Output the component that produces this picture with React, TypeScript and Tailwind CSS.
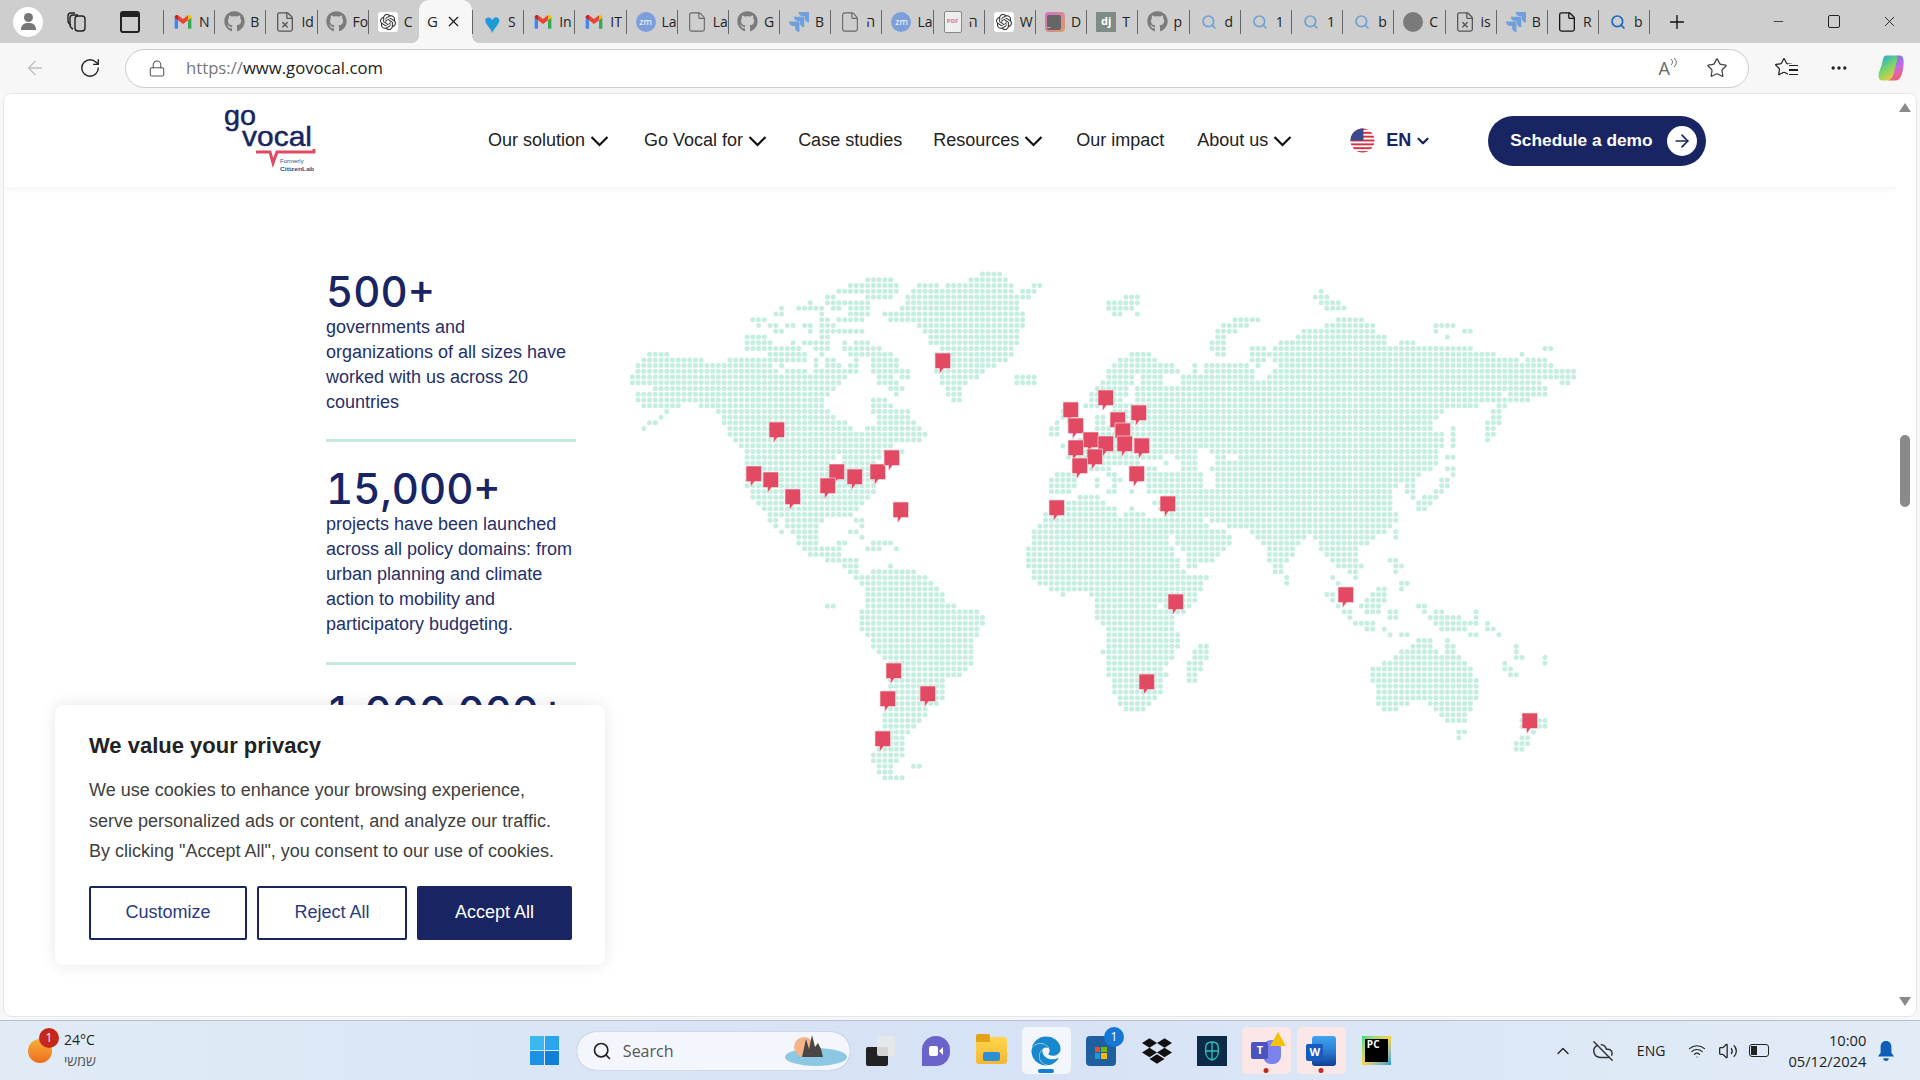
import { ArrowLeft, ChevronDown, ChevronUp, CloudOff, File, FileX, Lock, Minus, MoreHorizontal, Plus, RotateCw, Search, Star, Volume2, Wifi, X } from "lucide-react";
import { FaEdge, FaGithub } from "react-icons/fa";
import { SiDropbox, SiJira, SiOpenai } from "react-icons/si";

const NAVY = "#182562";

// dot map of the world, one string of column spans per row
const MAP_ROWS = [
  "61-64",
  "41-45 59-65",
  "38-46 50-53 55-66 70-71",
  "36-46 49-66 68-70 120",
  "34-35 41-45 48-69 86-88 119-121",
  "31 34-41 48-67 83-88 120-123",
  "26 29-33 35-36 38-41 47-67 83-87 121-124",
  "25-26 33 38-41 44-68 84-85 88",
  "21-23 33-34 36-40 45-68 105-109 123-127",
  "22 24-25 27-28 30-31 33-35 50-68 103-107 121-129 140-143",
  "25-26 31 33-40 51-67 102-105 117-129 140 145-146",
  "20-23 33-34 52-67 102-103 116-131 142",
  "20-24 28 30-34 37 39-41 52-67 101-103 113-131 134-136",
  "20-29 32-34 37-43 54-66 101-103 108-110 112-146 159-160",
  "3-6 24-30 33 38-45 53-66 87-90 102-103 108-150 155",
  "2-12 17-30 32 34-35 39 42-46 55-65 85-91 108-110 112-154 156-159",
  "1-24 26 32 34-36 38-39 42-46 54-63 84-94 98 100-107 109 113-160",
  "1-25 27-30 32-39 42-48 53-61 83-95 98 100-108 112-164",
  "0-37 43-45 47-48 54-60 67-70 83-87 89-92 96-108 111-164",
  "0-36 43-46 54-58 67-70 82-87 89-92 96-158 162-163",
  "4-35 45-47 55-57 81-86 88-159",
  "1-34 46 55-57 80-86 88-151 153-159",
  "1-33 42-44 56-57 80-85 88-156",
  "2-8 12-33 42-45 79-81 84-147 151-152",
  "6 15-34 42-48 75-77 84-141 150-151",
  "5 16-35 43-48 75-76 81-82 84-140 150-151",
  "3-4 16-37 43-49 74 81-82 84-139 149-151",
  "2 17-38 41-50 73-74 81-83 85-139 143 149-150",
  "17-51 73-74 80-141 143 149-150",
  "18-50 78-141 143 149",
  "19-45 75 78-141 143",
  "20-47 77-98 101-140",
  "20-35 37-43 76-92 95-98 102-103 106-140 142-143",
  "20-34 37-42 80-88 93 96-98 102-140",
  "20-41 78-83 90-91 96-98 101-139 142-143",
  "20-42 74-77 83-84 90-99 102-137 143",
  "20-42 73-77 81 84-85 90-99 102-136 141-142",
  "20-42 73-77 81 84 90-99 102-133 135-136 141-142",
  "21-42 73-76 83-84 87 90-132 135-136 140-141",
  "21-41 78-81 93-132 136 138-140",
  "22-40 76-82 91-132 137-139",
  "23-39 75-84 87 92-132 137-138",
  "24-38 72-84 86-89 93-133",
  "24-25 27-33 39-40 72-99 101-133",
  "25 27-32 40 71-100 104-132",
  "26 28-32 38-39 70-103 108-131 133",
  "29-32 40 70-93 95-104 109-117 119-129 133",
  "29-32 36-37 42-45 70-93 95-104 110-116 120-128",
  "30-36 41-43 46 69-94 96-103 111-115 120-126",
  "31-36 69-94 97-102 111-115 121-126",
  "34-39 69-95 97-101 111-114 122-126 132-133",
  "37-39 45 69-95 97-98 112-113 123-127 133-134",
  "38-39 42-49 70-96 112-113 125-126 133",
  "39-51 70-100 114 122 126",
  "40-52 71-99 114 123 134-135",
  "41-53 73-99 130-131 134",
  "41-54 75 80-98 121-122 129-131",
  "41-54 81-98 122 128-131",
  "34-35 41-56 81-91 93-97 123 127-130 137-138",
  "40-60 81-96 124-125 128-130 132-133 138 140-141 147",
  "40-61 81-94 125 132-133 139-144 147",
  "40-61 82-94 126-129 140-147 149",
  "40-60 83-94 128-129 131 141-145 149-150",
  "41-60 83-95 132 134-135 146-147 151",
  "42-59 83-95 137-139 142",
  "42-59 83-95 99-100 136-139 142-143 154",
  "43-59 82-94 98-100 134-140 142-143 154",
  "44-59 83-94 98-100 133-144 154-155 159",
  "45-59 83-93 97-99 131-145 152 159",
  "45-58 83-92 97-99 129-146 152-153",
  "45-57 83-93 97-98 129-146 153-154",
  "45-54 84-92 97-98 129-147",
  "45-54 84-92 130-147",
  "45-54 84-92 130-147",
  "46-54 85-91 130-147",
  "45-53 85-90 130-135 139-146",
  "45-51 86-89 131-133 140-146",
  "44-51 141-145",
  "44-50 142-145 155-159",
  "44-49 155-159",
  "43-48 144-145 157",
  "43-47 144 155-156",
  "43-47 154-156",
  "43-47 154-155",
  "42-47",
  "42-46",
  "43-45 49-50",
  "43-45",
  "44-47",
];

// top-left corner of each pin, in page pixels
const PINS: [number, number][] = [
  [935, 353], [769, 422], [746, 466], [763, 472], [785, 489], [829, 464], [820, 478], [847, 469], [870, 464],
  [884, 450], [893, 502], [1098, 390], [1063, 402], [1068, 418], [1110, 412], [1131, 405], [1115, 423], [1083, 432],
  [1098, 436], [1117, 436], [1134, 438], [1068, 440], [1087, 449], [1072, 458], [1129, 466], [1160, 496], [1049, 500],
  [1168, 594], [1139, 674], [886, 663], [880, 691], [920, 686], [875, 731], [1338, 587], [1522, 713],
];

function WorldMap() {
  const dots: { x: number; y: number }[] = [];
  MAP_ROWS.forEach((row, r) => {
    row.split(" ").forEach((span) => {
      const [a, b] = span.split("-").map(Number);
      for (let c = a; c <= (b ?? a); c++) {
        dots.push({ x: 632.3 + c * 5.74, y: 274 + r * 5.725 });
      }
    });
  });
  return (
    <svg viewBox="620 264 970 530" className="ml-[44px] mt-[77px] h-[530px] w-[970px] shrink-0">
      {dots.map((d, i) => (
        <circle key={i} cx={d.x} cy={d.y} r="2.5" fill="#c4eee0" />
      ))}
      {PINS.map(([x, y], i) => (
        <path
          key={i}
          transform={`translate(${x} ${y})`}
          d="M0 0H15.5V15.5H8.5L4.5 21V15.5H0Z"
          fill="#e24a63"
          stroke="#f6dbe0"
          strokeWidth="0.7"
        />
      ))}
    </svg>
  );
}

function Gmail() {
  return (
    <svg viewBox="0 0 24 24" className="h-[20px] w-[20px]">
      <path d="M2 6v14h4V10z" fill="#4285f4" />
      <path d="M22 6v14h-4V10z" fill="#34a853" />
      <path d="M18 4v6l-6 4.5L6 10V4l6 4.5z" fill="#ea4335" />
      <path d="M2 6c0-2 2.5-3 4-2v6L2 7z" fill="#c5221f" />
      <path d="M22 6c0-2-2.5-3-4-2v6l4-3z" fill="#fbbc04" />
    </svg>
  );
}

function Zoom() {
  return (
    <div className="flex h-[20px] w-[20px] items-center justify-center rounded-full bg-[#7c9fdc] text-[9px] text-white">zm</div>
  );
}

function Jira({ className = "text-[#6f9fdc]" }: { className?: string }) {
  return <SiJira className={`h-[20px] w-[20px] ${className}`} />;
}

function Glass({ className = "text-[#6ea3d2]" }: { className?: string }) {
  return <Search className={`h-[16px] w-[16px] ${className}`} strokeWidth={2.5} />;
}

function Doc() {
  return <File className="h-[22px] w-[22px] text-[#666]" strokeWidth={1.2} />;
}

function Gh() {
  return <FaGithub className="h-[21px] w-[21px] text-[#7b7b7b]" />;
}

function Gpt() {
  return (
    <div className="flex h-[20px] w-[20px] items-center justify-center rounded-[3px] bg-white">
      <SiOpenai className="h-[16px] w-[16px] text-[#333]" />
    </div>
  );
}

function DocX() {
  return <FileX className="h-[22px] w-[22px] text-[#555]" strokeWidth={1.4} />;
}

const TABS: { icon: React.ReactNode; label: string }[] = [
  { icon: <Gmail />, label: "N" },
  { icon: <Gh />, label: "B" },
  { icon: <DocX />, label: "Id" },
  { icon: <Gh />, label: "Fo" },
  { icon: <Gpt />, label: "C" },
  { icon: null, label: "active" },
  { icon: <span className="text-[28px] leading-none text-[#1e9ad6]">♥</span>, label: "S" },
  { icon: <Gmail />, label: "In" },
  { icon: <Gmail />, label: "IT" },
  { icon: <Zoom />, label: "La" },
  { icon: <Doc />, label: "La" },
  { icon: <Gh />, label: "G" },
  { icon: <Jira />, label: "B" },
  { icon: <Doc />, label: "ה" },
  { icon: <Zoom />, label: "La" },
  { icon: <div className="flex h-[22px] w-[18px] items-center justify-center rounded-[2px] border border-[#888] bg-[#eee] text-[6px] font-bold text-[#d77]">PDF</div>, label: "ה" },
  { icon: <Gpt />, label: "W" },
  { icon: <div className="flex h-[20px] w-[20px] items-end rounded-[4px] bg-gradient-to-br from-[#d36fc4] to-[#e09a5c] p-[2px]"><div className="h-[15px] w-[14px] rounded-[2px] bg-[#666] text-[8px] leading-[18px] text-white">_</div></div>, label: "D" },
  { icon: <div className="flex h-[20px] w-[20px] items-center justify-center bg-[#7d8c86] text-[11px] font-bold text-white">dj</div>, label: "T" },
  { icon: <Gh />, label: "p" },
  { icon: <Glass />, label: "d" },
  { icon: <Glass />, label: "1" },
  { icon: <Glass />, label: "1" },
  { icon: <Glass />, label: "b" },
  { icon: <div className="h-[20px] w-[20px] rounded-full bg-[#7a7a7a]" />, label: "C" },
  { icon: <DocX />, label: "is" },
  { icon: <Jira />, label: "B" },
  { icon: <File className="h-[22px] w-[22px] text-[#111]" strokeWidth={1.4} />, label: "R" },
  { icon: <Glass className="text-[#1769c4]" />, label: "b" },
];

function TabBar() {
  return (
    <div className="flex h-[43px] items-center bg-[#cecece] font-['Open_Sans',sans-serif] text-[14px] text-[#222]">
      <div className="ml-[13px] flex h-[30px] w-[30px] flex-col items-center justify-center rounded-full bg-white">
        <div className="h-[9px] w-[9px] rounded-full bg-[#777]" />
        <div className="mt-[1px] h-[7px] w-[15px] rounded-t-[6px] bg-[#777]" />
      </div>
      <svg viewBox="0 0 24 24" className="ml-[22px] h-[24px] w-[24px]" fill="none" stroke="#222" strokeWidth="1.4">
        <rect x="10" y="6" width="10" height="15" rx="3" />
        <path d="M8 19c-2-1-3-2-3-4V8c0-2 1-3 3-3h5M6 15c-2-1-3-2-3-4V6c0-2 1-3 3-3h4" />
      </svg>
      <div className="ml-[31px] h-[22px] w-[20px] rounded-[3px] border-2 border-[#222] border-t-[6px]" />
      <div className="ml-[23px] flex h-[43px] items-center">
        {TABS.map((t, i) =>
          t.label === "active" ? (
            <div key={i} className="relative flex h-[43px] w-[53px] items-center rounded-t-[10px] bg-[#f7f7f7] pl-[8px] text-[15px]">
              <div className="absolute bottom-0 -left-[8px] h-[8px] w-[8px] bg-[radial-gradient(circle_at_0_0,transparent_8px,#f7f7f7_8px)]" />
              <div className="absolute bottom-0 -right-[8px] h-[8px] w-[8px] bg-[radial-gradient(circle_at_100%_0,transparent_8px,#f7f7f7_8px)]" />
              <span>G</span>
              <X className="ml-[7px] h-[17px] w-[17px] text-[#111]" strokeWidth={1.6} />
            </div>
          ) : (
            <div key={i} className="flex h-[24px] w-[51.2px] items-center border-l border-[#666] pl-[8px]">
              <div className="flex w-[22px] shrink-0 justify-center">{t.icon}</div>
              <span className="ml-[5px] whitespace-nowrap">{t.label}</span>
            </div>
          )
        )}
      </div>
      <div className="h-[24px] border-l border-[#666]" />
      <Plus className="ml-[16px] h-[22px] w-[22px] text-[#111]" strokeWidth={1.5} />
      <Minus className="ml-[83px] h-[15px] w-[15px] text-[#222]" strokeWidth={1.3} />
      <div className="ml-[42px] h-[13px] w-[12px] rounded-[2px] border border-[#222]" />
      <X className="ml-[41px] h-[17px] w-[17px] text-[#222]" strokeWidth={1.3} />
    </div>
  );
}

function AddressBar() {
  return (
    <div className="flex h-[51px] items-center bg-[#f7f7f7] pb-[1px]">
      <ArrowLeft className="ml-[24px] h-[22px] w-[22px] text-[#c0c0c0]" strokeWidth={1.5} />
      <RotateCw className="ml-[33px] h-[22px] w-[22px] text-[#222]" strokeWidth={1.5} />
      <div className="ml-[24px] flex h-[39px] w-[1624px] items-center rounded-full border border-[#ccc] bg-white">
        <Lock className="ml-[22px] h-[19px] w-[18px] text-[#555]" strokeWidth={1.4} />
        <span className="ml-[20px] font-['Open_Sans',sans-serif] text-[16.700px] text-[#222]">
          <span className="text-[#777]">https://</span>www.govocal.com
        </span>
        <div className="ml-auto flex items-start">
          <span className="font-['Open_Sans',sans-serif] text-[18px] leading-[22px] text-[#666]">A</span>
          <svg viewBox="0 0 8 12" className="h-[12px] w-[8px]" fill="none" stroke="#666" strokeWidth="1">
            <path d="M1 2c2 2 2 4 0 6M4 1c3 3 3 6 0 9" />
          </svg>
        </div>
        <Star className="ml-[28px] mr-[20px] h-[22px] w-[22px] text-[#444]" strokeWidth={1.4} />
      </div>
      <div className="relative ml-[25px] h-[22px] w-[24px]">
        <Star className="h-[20px] w-[20px] text-[#222]" strokeWidth={1.5} />
        <div className="absolute bottom-[3px] right-0 flex w-[10px] flex-col gap-[3px] bg-[#f7f7f7] py-[1px] pl-[1px]">
          <div className="h-[1.500px] bg-[#222]" />
          <div className="h-[1.500px] bg-[#222]" />
          <div className="h-[1.500px] bg-[#222]" />
        </div>
      </div>
      <MoreHorizontal className="ml-[31px] h-[20px] w-[20px] text-[#222]" />
      <svg viewBox="0 0 24 24" className="ml-[27px] h-[30px] w-[30px]">
        <defs>
          <linearGradient id="cpA" x1="0" y1="0" x2="0.6" y2="1">
            <stop offset="0" stopColor="#19a3e6" />
            <stop offset="0.55" stopColor="#74d66a" />
            <stop offset="1" stopColor="#f4c93f" />
          </linearGradient>
          <linearGradient id="cpB" x1="0" y1="0" x2="0.3" y2="1">
            <stop offset="0" stopColor="#5f7df0" />
            <stop offset="0.6" stopColor="#c56ce0" />
            <stop offset="1" stopColor="#f0607a" />
          </linearGradient>
        </defs>
        <path d="M8 2h7c2 0 3 1 3 3l-4 14c-.6 2-2 3-4 3H5c-2 0-3-1.500-3-4 0-3 2-6 3-10C5.600 5 6 2 8 2z" fill="url(#cpA)" />
        <path d="M16 2h3c3 0 3.500 4 3 8-.5 5-2 12-6 12h-6c2-1 3-2 4-5l3-12c.3-1 0-2-1-3z" fill="url(#cpB)" />
      </svg>
    </div>
  );
}

function Chevron() {
  return (
    <svg viewBox="0 0 18 12" className="ml-[5px] h-[12px] w-[19px]" fill="none" stroke="#111" strokeWidth="2.2">
      <path d="M1 2l8 8 8-8" />
    </svg>
  );
}

function Logo() {
  return (
    <svg viewBox="224 108 92 64" className="h-[64px] w-[92px] shrink-0 overflow-visible">
      <text x="224" y="124" fontSize="28" fill={NAVY} stroke={NAVY} strokeWidth="0.5" fontFamily="Liberation Sans, sans-serif" textLength="32" lengthAdjust="spacingAndGlyphs">go</text>
      <text x="242" y="145" fontSize="28" fill={NAVY} stroke={NAVY} strokeWidth="0.5" fontFamily="Liberation Sans, sans-serif" textLength="70" lengthAdjust="spacingAndGlyphs">vocal</text>
      <path d="M256 151h14l3 11 4-11h37v-3" fill="none" stroke="#e24a63" strokeWidth="3" />
      <text x="280" y="162" fontSize="6" fill="#3a4a80" fontFamily="Liberation Sans, sans-serif">Formerly</text>
      <text x="280" y="169.500" fontSize="6" fill="#3a4a80" fontFamily="Liberation Sans, sans-serif" fontWeight="700" textLength="34" lengthAdjust="spacingAndGlyphs">CitizenLab</text>
    </svg>
  );
}

function FlagUS() {
  return (
    <svg viewBox="0 0 26 26" className="h-[25px] w-[25px]">
      <clipPath id="flag"><circle cx="13" cy="13" r="12.500" /></clipPath>
      <g clipPath="url(#flag)">
        <rect width="26" height="26" fill="#fff" />
        {[0, 4, 8, 12, 16, 20, 24].map((y) => (
          <rect key={y} y={y} width="26" height="2" fill="#d8303f" />
        ))}
        <rect width="14" height="13" fill="#3b4a8c" />
      </g>
    </svg>
  );
}

function Header() {
  return (
    <div className="relative z-10 flex h-[93px] items-center bg-white pl-[220px] font-['Liberation_Sans',sans-serif] text-[18px] text-[#222] shadow-[0_2px_6px_rgba(0,0,0,0.06)]">
      <Logo />
      <span className="ml-[172px]">Our solution</span>
      <Chevron />
      <span className="ml-[35px]">Go Vocal for</span>
      <Chevron />
      <span className="ml-[31px]">Case studies</span>
      <span className="ml-[31px]">Resources</span>
      <Chevron />
      <span className="ml-[33px]">Our impact</span>
      <span className="ml-[33px]">About us</span>
      <Chevron />
      <div className="ml-[58px]"><FlagUS /></div>
      <span className="ml-[11px] font-bold" style={{ color: NAVY }}>EN</span>
      <ChevronDown className="ml-[3px] h-[18px] w-[18px] text-[#182562]" strokeWidth={3} />
      <div className="ml-[56px] flex h-[50px] w-[218px] items-center justify-between rounded-full bg-[#182562] pl-[22px] pr-[9px] font-bold text-white">
        <span className="text-[17.300px]">Schedule a demo</span>
        <div className="flex h-[30px] w-[30px] items-center justify-center rounded-full bg-white">
          <ArrowLeft className="h-[20px] w-[20px] rotate-180 text-[#182562]" strokeWidth={2} />
        </div>
      </div>
    </div>
  );
}

function Stat({ value, children }: { value: string; children?: React.ReactNode }) {
  return (
    <div>
      <div className="font-['Inter',sans-serif] text-[42px] font-medium leading-[47px] tabular-nums text-[#182562]">{value}</div>
      {children && <p className="text-[18px] leading-[25px] text-[#24306a]">{children}</p>}
    </div>
  );
}

function Stats() {
  return (
    <div className="w-[250px] shrink-0 pt-[81px] font-['Liberation_Sans',sans-serif]">
      <Stat value="500+">
        governments and
        <br />
        organizations of all sizes have worked with us across 20 countries
      </Stat>
      <div className="mb-[23px] mt-[24px] h-[3px] bg-[#c4eadc]" />
      <Stat value="15,000+">projects have been launched across all policy domains: from urban planning and climate action to mobility and participatory budgeting.</Stat>
      <div className="mb-[23px] mt-[25px] h-[3px] bg-[#c4eadc]" />
      <Stat value="1,000,000+" />
    </div>
  );
}

function CookieCard() {
  return (
    <div className="absolute left-[51px] top-[611px] z-20 h-[260px] w-[550px] rounded-[8px] bg-white pl-[34px] pr-[30px] pt-[27px] font-['Liberation_Sans',sans-serif] shadow-[0_0_16px_rgba(0,0,0,0.1)]">
      <h2 className="text-[22px] font-bold leading-[28px] text-[#222]">We value your privacy</h2>
      <p className="mt-[15px] w-[482px] text-[18px] leading-[30.500px] text-[#404040]">
        We use cookies to enhance your browsing experience, serve personalized ads or content, and analyze our traffic. By clicking "Accept All", you consent to our use of cookies.
      </p>
      <div className="mt-[19px] flex gap-[10px] text-[18px]">
        <button className="h-[54px] w-[158px] shrink-0 rounded-[2px] border-2 border-[#182562] text-[#2b3a80]">Customize</button>
        <button className="h-[54px] w-[150px] shrink-0 rounded-[2px] border-2 border-[#182562] text-[#2b3a80]">Reject All</button>
        <button className="h-[54px] w-[155px] shrink-0 rounded-[2px] bg-[#182562] text-white">Accept All</button>
      </div>
    </div>
  );
}

function Scrollbar() {
  return (
    <div className="relative z-10 flex w-[19px] shrink-0 flex-col items-center bg-white pb-[10px] pl-[1px] pr-[5px] pt-[9px]">
      <div className="h-0 w-0 border-x-[6px] border-b-[9px] border-x-transparent border-b-[#8a8a8a]" />
      <div className="mt-[323px] h-[72px] w-[10px] rounded-full bg-[#8a8a8a]" />
      <div className="mt-auto h-0 w-0 border-x-[6px] border-t-[9px] border-x-transparent border-t-[#8a8a8a]" />
    </div>
  );
}

function TaskIcon({ children, active, pink, dot }: { children: React.ReactNode; active?: boolean; pink?: boolean; dot?: string }) {
  return (
    <div className={`relative flex h-[47px] w-[49px] items-center justify-center rounded-[5px] ${active ? "bg-[#f3f6fb]" : ""} ${pink ? "bg-[#fbe6e8]" : ""}`}>
      {children}
      {dot && <div className={`absolute bottom-[1px] left-1/2 -translate-x-1/2 rounded-full ${dot}`} />}
    </div>
  );
}

function Taskbar() {
  return (
    <div className="flex h-[60px] items-center border-t border-[#b7bfcc] bg-gradient-to-r from-[#e0ebf6] via-[#d6e2f5] to-[#e2ecf7] font-['Open_Sans',sans-serif] text-[#222]">
      <div className="relative ml-[28px] h-[24px] w-[24px] rounded-full bg-gradient-to-b from-[#f6b13a] to-[#ee6b1c]">
        <div className="absolute -top-[11px] left-[11px] flex h-[20px] w-[20px] items-center justify-center rounded-full bg-[#c4281c] text-[12px] text-white">1</div>
      </div>
      <div className="ml-[12px] -mt-[2px] text-[14px] leading-[21px]">
        <div>24°C</div>
        <div className="text-[#555]" dir="rtl">שמשי</div>
      </div>
      <div className="ml-[434px] grid h-[29px] w-[29px] grid-cols-2 gap-[1px]">
        <div className="bg-[#3bb8f0]" />
        <div className="bg-[#2aa4ec]" />
        <div className="bg-[#1b93e4]" />
        <div className="bg-[#0f7fd8]" />
      </div>
      <div className="ml-[18px] flex h-[38px] w-[273px] items-center rounded-full bg-[#f3f6fc] pl-[15px] shadow-[0_0_1px_rgba(0,0,0,0.4)]">
        <Search className="h-[20px] w-[20px] text-[#222]" strokeWidth={2} />
        <span className="ml-[11px] text-[16px] text-[#555]">Search</span>
        <svg viewBox="0 0 64 36" className="ml-auto mr-[2px] h-[36px] w-[64px]">
          <ellipse cx="32" cy="24" rx="31" ry="9" fill="#8cc8e4" />
          <circle cx="20" cy="14" r="10" fill="#f3b48a" />
          <path d="M18 24L22 6l3 10 3-14 3 12 3-4 3 6 2 8z" fill="#4a4644" />
        </svg>
      </div>
      <div className="relative ml-[16px] h-[30px] w-[29px]">
        <div className="absolute bottom-0 left-0 h-[19px] w-[22px] rounded-[2px] bg-[#222]" />
        <div className="absolute right-0 top-0 h-[20px] w-[18px] rounded-[2px] bg-[#e8e8e8]/90" />
      </div>
      <div className="relative ml-[27px] flex h-[30px] w-[28px] items-center justify-center rounded-full rounded-bl-[4px] bg-[#6a63c9]">
        <div className="h-[10px] w-[9px] rounded-[2px] bg-white" />
        <div className="ml-[1px] h-0 w-0 border-y-[4px] border-r-[4px] border-y-transparent border-r-white" />
      </div>
      <div className="relative ml-[26px] h-[27px] w-[31px] rounded-[3px] bg-gradient-to-b from-[#ffd64f] to-[#f7b731]">
        <div className="absolute -top-[3px] left-0 h-[8px] w-[14px] rounded-t-[2px] bg-[#e3a21a]" />
        <div className="absolute bottom-[3px] left-[7px] h-[9px] w-[17px] rounded-[2px] bg-[#2d8fd6]" />
      </div>
      <div className="ml-[15px]">
        <TaskIcon active dot="h-[4px] w-[16px] bg-[#0f7fd8]">
          <FaEdge className="h-[30px] w-[30px] text-[#1888cf]" />
        </TaskIcon>
      </div>
      <div className="relative ml-[15px] h-[30px] w-[30px] rounded-[4px] bg-[#1f5fa0]">
        <div className="absolute left-[9px] top-[11px] grid h-[12px] w-[12px] grid-cols-2 gap-[1px]">
          <div className="bg-[#e8502a]" />
          <div className="bg-[#7ab800]" />
          <div className="bg-[#1e9ad6]" />
          <div className="bg-[#f6b900]" />
        </div>
        <div className="absolute -right-[8px] -top-[9px] flex h-[20px] w-[20px] items-center justify-center rounded-full bg-[#1478d4] text-[12px] text-white">1</div>
      </div>
      <SiDropbox className="ml-[26px] h-[30px] w-[30px] text-[#111]" />
      <div className="ml-[25px] flex h-[30px] w-[30px] items-center justify-center bg-[#0c2a4a]">
        <svg viewBox="0 0 20 24" className="h-[22px] w-[18px]" fill="none" stroke="#2cc0b8" strokeWidth="1.5">
          <path d="M10 2c4 0 7 2 7 6v6c0 4-4 7-7 8-3-1-7-4-7-8V8c0-4 3-6 7-6zM10 2v20M3 12h14" />
        </svg>
      </div>
      <div className="ml-[15px]">
        <TaskIcon pink dot="h-[5px] w-[5px] bg-[#c4281c]">
          <div className="relative flex h-[30px] w-[30px] items-center">
            <div className="absolute right-0 top-[4px] h-[24px] w-[18px] rounded-[8px] bg-[#7b83eb]" />
            <div className="relative flex h-[17px] w-[17px] items-center justify-center rounded-[2px] bg-[#4b53bc] text-[11px] font-bold text-white">T</div>
            <div className="absolute -right-[5px] -top-[4px] h-0 w-0 border-x-[8px] border-b-[14px] border-x-transparent border-b-[#f4c20d]" />
          </div>
        </TaskIcon>
      </div>
      <div className="ml-[6px]">
        <TaskIcon pink dot="h-[5px] w-[5px] bg-[#c4281c]">
          <div className="relative h-[30px] w-[30px]">
            <div className="absolute right-0 top-0 h-[30px] w-[24px] rounded-[3px] bg-gradient-to-b from-[#41a5ee] via-[#2b7cd3] to-[#103f91]" />
            <div className="absolute left-0 top-[8px] flex h-[17px] w-[17px] items-center justify-center rounded-[2px] bg-[#185abd] text-[11px] font-bold text-white">W</div>
          </div>
        </TaskIcon>
      </div>
      <div className="ml-[16px] flex h-[29px] w-[29px] items-center justify-center bg-gradient-to-br from-[#21d789] via-[#f5d33f] to-[#0f9bd8] p-[3px]">
        <div className="h-full w-full bg-black pl-[2px] text-[10px] font-bold leading-[11px] text-white">PC</div>
      </div>
      <ChevronUp className="ml-[162px] h-[20px] w-[20px] text-[#222]" strokeWidth={1.6} />
      <CloudOff className="ml-[19px] h-[22px] w-[22px] text-[#333]" strokeWidth={1.6} />
      <span className="ml-[23px] text-[14px]">ENG</span>
      <Wifi className="ml-[23px] h-[18px] w-[18px]" strokeWidth={1.6} />
      <Volume2 className="ml-[12px] h-[20px] w-[20px]" strokeWidth={1.5} />
      <div className="ml-[11px] flex h-[13px] w-[20px] items-center rounded-[3px] border border-[#222] pl-[1px]">
        <div className="h-[9px] w-[6px] bg-[#222]" />
      </div>
      <div className="ml-[9px] w-[88px] text-right text-[14.700px] leading-[21px]">
        <div>10:00</div>
        <div>05/12/2024</div>
      </div>
      <svg viewBox="0 0 20 24" className="ml-[11px] h-[22px] w-[18px]" fill="#0f5fb8">
        <path d="M10 1c4 0 6 3 6 7v6l3 4H1l3-4V8c0-4 2-7 6-7zM7 20h6c0 2-1 3-3 3s-3-1-3-3z" />
      </svg>
    </div>
  );
}

export default function App() {
  return (
    <div className="flex h-[1080px] w-[1920px] flex-col overflow-hidden bg-[#f7f7f7]">
      <TabBar />
      <AddressBar />
      <div className="relative ml-[4px] mr-[4px] flex h-[922px] flex-col overflow-hidden rounded-t-[8px] rounded-b-[8px] bg-white outline outline-1 outline-[#e6e6e6]">
        <div className="flex min-h-0 flex-1">
          <div className="relative min-w-0 flex-1">
            <Header />
            <div className="flex pl-[322px]">
              <Stats />
              <WorldMap />
            </div>
            <CookieCard />
          </div>
          <Scrollbar />
        </div>
      </div>
      <div className="h-[4px]" />
      <Taskbar />
    </div>
  );
}
